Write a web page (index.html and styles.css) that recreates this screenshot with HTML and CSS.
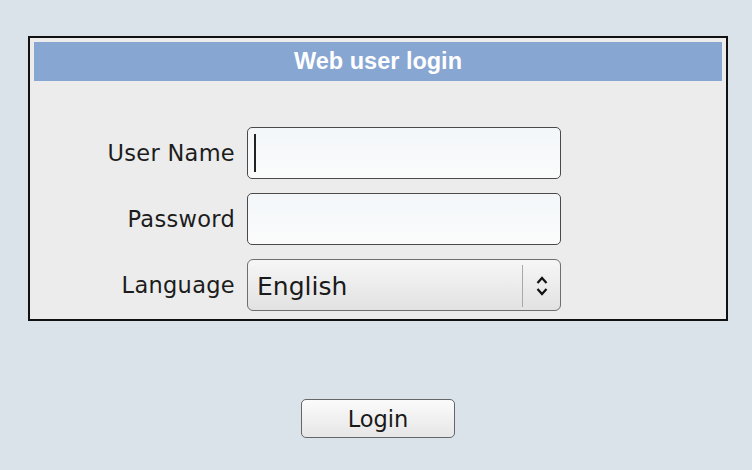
FILE: index.html
```html
<!DOCTYPE html>
<html lang="en">
<head>
    <meta charset="UTF-8">
    <title>Web user login</title>
    <link rel="stylesheet" href="styles.css">
</head>
<body>
    <div class="page">
        <div class="login-box">
            <div class="title">Web user login</div>
            <form class="fields">
                <label class="label" for="user">User Name</label>
                <div class="field">
                    <input class="input" id="user" type="text">
                    <span class="caret"></span>
                </div>
                <label class="label" for="pass">Password</label>
                <div class="field">
                    <input class="input" id="pass" type="password">
                </div>
                <label class="label" for="lang">Language</label>
                <div class="select">
                    <select id="lang">
                        <option>English</option>
                    </select>
                    <div class="arrow">
                        <svg width="14" height="24" viewBox="0 0 14 24">
                            <path d="M2.5 9 L7 4 L11.5 9" fill="none" stroke="#111" stroke-width="2.2"/>
                            <path d="M2.5 15 L7 20 L11.5 15" fill="none" stroke="#111" stroke-width="2.2"/>
                        </svg>
                    </div>
                </div>
            </form>
        </div>
        <div class="actions">
            <button class="login">Login</button>
        </div>
    </div>
</body>
</html>
```

FILE: styles.css
```css
body {
    margin: 0;
    background: #dae2ea;
    font-family: "DejaVu Sans", sans-serif;
}

.page {
    padding: 36px 0 0 28px;
    width: 700px;
}

.login-box {
    border: 2px solid #111;
    background: #ececec;
    padding: 4px 4px 8px 4px;
}

.title {
    background: #87a6d2;
    color: #fff;
    font-family: "Liberation Sans", Arial, sans-serif;
    font-weight: bold;
    font-size: 23.5px;
    text-align: center;
    height: 39px;
    line-height: 39px;
}

.fields {
    display: grid;
    grid-template-columns: 201px 314px;
    column-gap: 12px;
    row-gap: 14px;
    align-items: center;
    margin: 46px 0 0 0;
}

.label {
    text-align: right;
    font-size: 22.5px;
    letter-spacing: 0.3px;
    color: #1c1c1c;
}

.field {
    position: relative;
    height: 52px;
}

.input {
    box-sizing: border-box;
    width: 100%;
    height: 52px;
    border: 1.5px solid #4a4a4a;
    border-radius: 5px;
    background: linear-gradient(180deg, #f3f7fa, #fbfbfb);
    outline: none;
}

.caret {
    position: absolute;
    left: 7px;
    top: 7px;
    width: 2px;
    height: 38px;
    background: #222;
}

.select {
    display: flex;
    box-sizing: border-box;
    height: 52px;
    border: 1.5px solid #6e6e6e;
    border-radius: 6px;
    background: linear-gradient(180deg, #f6f6f6, #e2e2e2);
}

.select select {
    flex: 1;
    appearance: none;
    border: none;
    background: transparent;
    font-family: "DejaVu Sans", sans-serif;
    font-size: 25px;
    color: #1a1a1a;
    padding: 2px 0 0 9px;
    outline: none;
}

.arrow {
    width: 37px;
    margin: 5px 0 3px 0;
    border-left: 1.5px solid #a8a8a8;
    display: flex;
    align-items: center;
    justify-content: center;
}

.actions {
    display: flex;
    justify-content: center;
    margin-top: 78px;
}

.login {
    width: 154px;
    height: 39px;
    border: 1.5px solid #666;
    border-radius: 5px;
    background: linear-gradient(180deg, #fbfbfb, #e6e6e6);
    font-family: "DejaVu Sans", sans-serif;
    font-size: 22.5px;
    color: #1a1a1a;
    cursor: pointer;
}
```
